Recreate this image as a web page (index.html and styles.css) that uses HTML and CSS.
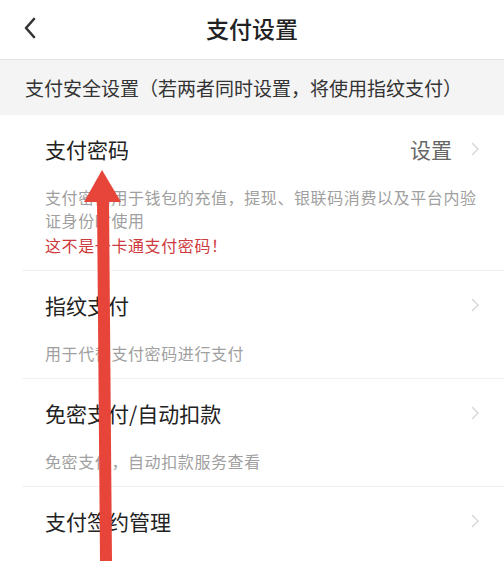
FILE: index.html
```html
<!DOCTYPE html>
<html lang="zh-CN">
<head>
    <meta charset="UTF-8">
    <meta name="viewport" content="width=device-width, initial-scale=1.0">
    <title>支付设置</title>
    <link rel="stylesheet" href="styles.css">
</head>
<body>
    <div class="page">
        <div class="header">
            <svg class="back" width="14" height="22" viewBox="0 0 14 22">
                <path d="M11 2 L3 11 L11 20" fill="none" stroke="#333" stroke-width="2.6" stroke-linecap="round" stroke-linejoin="round"/>
            </svg>
            <div class="title">支付设置</div>
        </div>
        <div class="section">支付安全设置（若两者同时设置，将使用指纹支付）</div>
        <div class="list">
            <div class="item">
                <div class="item-row">
                    <span class="item-title">支付密码</span>
                    <span class="item-value">设置</span>
                    <svg class="chevron" width="10" height="16" viewBox="0 0 10 16"><path d="M2 2 L8 8 L2 14" fill="none" stroke="#d6d6d6" stroke-width="1.4"/></svg>
                </div>
                <div class="item-desc">支付密码用于钱包的充值，提现、银联码消费以及平台内验证身份时使用</div>
                <div class="item-warn">这不是一卡通支付密码！</div>
            </div>
            <div class="item">
                <div class="item-row">
                    <span class="item-title">指纹支付</span>
                    <svg class="chevron" width="10" height="16" viewBox="0 0 10 16"><path d="M2 2 L8 8 L2 14" fill="none" stroke="#d6d6d6" stroke-width="1.4"/></svg>
                </div>
                <div class="item-desc">用于代替支付密码进行支付</div>
            </div>
            <div class="item">
                <div class="item-row">
                    <span class="item-title">免密支付/自动扣款</span>
                    <svg class="chevron" width="10" height="16" viewBox="0 0 10 16"><path d="M2 2 L8 8 L2 14" fill="none" stroke="#d6d6d6" stroke-width="1.4"/></svg>
                </div>
                <div class="item-desc">免密支付，自动扣款服务查看</div>
            </div>
            <div class="item">
                <div class="item-row">
                    <span class="item-title">支付签约管理</span>
                    <svg class="chevron" width="10" height="16" viewBox="0 0 10 16"><path d="M2 2 L8 8 L2 14" fill="none" stroke="#d6d6d6" stroke-width="1.4"/></svg>
                </div>
                <div class="item-desc">支付签约服务管理</div>
            </div>
        </div>
        <svg class="arrow" width="504" height="561" viewBox="0 0 504 561">
            <polygon points="102,170 121,202 84,202" fill="#e8453a"/>
            <polygon points="97,200 109,200 112,561 100,561" fill="#e8453a"/>
        </svg>
    </div>
</body>
</html>
```

FILE: styles.css
```css
body {
    margin: 0;
    background-color: #fff;
    font-family: "Noto Sans CJK SC", "Noto Sans", sans-serif;
    color: #222;
}
.page {
    position: relative;
    width: 504px;
    height: 561px;
    overflow: hidden;
}
.header {
    height: 59px;
    display: flex;
    align-items: center;
    justify-content: center;
    position: relative;
    border-bottom: 1px solid #e6e6e6;
}
.back {
    position: absolute;
    left: 23px;
    top: 17px;
}
.title {
    font-size: 23px;
    font-weight: 500;
    color: #222;
    margin-top: -3px;
}
.section {
    height: 55px;
    background-color: #f4f4f4;
    display: flex;
    align-items: center;
    padding-left: 25px;
    font-size: 19px;
    color: #333;
}
.list {
    display: flex;
    flex-direction: column;
}
.item {
    margin-left: 22px;
    padding: 19px 24px 13px 23px;
    border-bottom: 1px solid #f1f1f1;
}
.item-row {
    display: flex;
    align-items: center;
    height: 30px;
}
.item-title {
    flex: 1;
    font-size: 21px;
    color: #222;
}
.item-value {
    font-size: 21px;
    color: #666;
    margin-right: 18px;
}
.item-desc {
    margin-top: 22px;
    font-size: 16px;
    line-height: 23px;
    letter-spacing: 0.6px;
    color: #a0a0a0;
}
.item-warn {
    margin-top: 2px;
    font-size: 16px;
    line-height: 23px;
    letter-spacing: 0.6px;
    color: #cf3a3e;
}
.arrow {
    position: absolute;
    left: 0;
    top: 0;
}
```
